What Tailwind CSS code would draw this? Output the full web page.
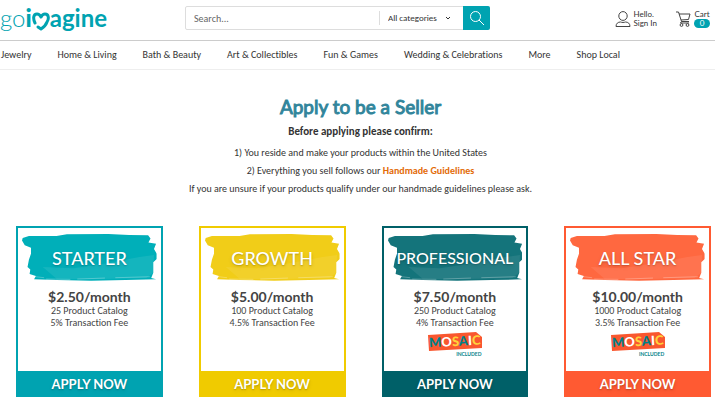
<!DOCTYPE html>
<html lang="en">
<head>
  <meta charset="UTF-8" />
  <meta name="viewport" content="width=device-width, initial-scale=1" />
  <title>Apply to be a Seller - goimagine</title>
  <script src="https://cdn.jsdelivr.net/npm/@tailwindcss/browser@4"></script>
</head>
<body class="bg-white font-['Carlito','Lato',sans-serif] text-[10px] text-[#333] overflow-x-hidden [font-variant-ligatures:none]">

  <!-- Header -->
  <header class="grid grid-cols-[185px_1fr_225px] h-[41px] border-b border-[#ccc]">
    <a href="#" aria-label="goimagine" class="flex items-baseline pt-0.5 font-['Lato',sans-serif] text-2xl leading-8 text-[#00a3b1]">
      <span class="font-light">go</span><span class="font-black">i</span>
      <svg class="w-[18px] h-[20px] self-start mt-2.5" viewBox="0 0 18 20" fill="none" stroke="currentColor" stroke-width="3" stroke-linecap="round" stroke-linejoin="round">
        <path d="M3 11C1 7 1 2 5 2c2 0 3 1 4 3 1-2 2-3 4-3 4 0 4 5 2 8-1 3-3 5-6 7L6 15" />
      </svg>
      <span class="font-bold">agine</span>
    </a>

    <form class="flex h-6 mt-1.5 border border-[#ddd] rounded-xs">
      <input type="text" aria-label="Search" placeholder="Search..." class="flex-1 min-w-0 pl-2 outline-none placeholder:text-[#666]" />
      <div class="relative flex items-center my-1 border-l border-[#ddd]">
        <select aria-label="Category" class="appearance-none w-[83px] pl-2 text-[9px] outline-none">
          <option>All categories</option>
        </select>
        <svg class="absolute right-3 w-1.5 h-1.5 pointer-events-none" viewBox="0 0 6 6" fill="none" stroke="#333"><path d="M1 2l2 2 2-2" /></svg>
      </div>
      <button type="submit" aria-label="Search" class="flex items-center justify-center w-[27px] -my-px -mr-px bg-[#00a3b1] rounded-r-xs">
        <svg class="w-4 h-4" viewBox="0 0 16 16" fill="none" stroke="white"><circle cx="6.5" cy="6.5" r="5" /><path d="M10 10l5 5" /></svg>
      </button>
    </form>

    <div class="flex justify-end gap-[19px] pt-2.5 pr-[5px] font-['Lato',sans-serif] text-[8px] leading-[9px]">
      <a href="#" class="flex gap-0.5">
        <svg class="w-4 h-4 mt-px" viewBox="0 0 16 16" fill="none" stroke="#444"><ellipse cx="8" cy="5" rx="4.2" ry="4.400" /><path d="M1 15.500c0-3 2-4.500 4.500-4.500 1.500.6 3.500.6 5 0C13 11 15 12.500 15 15.500z" /></svg>
        <span>Hello.<br />Sign In</span>
      </a>
      <a href="#" class="flex gap-[3px]">
        <svg class="w-[15px] h-4 mt-px" viewBox="0 0 15 16" fill="none" stroke="#444"><path d="M0 1h2.500l3 9.500H13M3 3h11l-1.500 5.500-7.500.5M5.500 10.500L4.500 12H13" /><circle cx="5.500" cy="14" r="1.400" /><circle cx="11.500" cy="14" r="1.400" /></svg>
        <span class="flex flex-col items-center">Cart<span class="w-4 rounded-full bg-[#00a3b1] text-center text-white">0</span></span>
      </a>
    </div>
  </header>

  <!-- Categories -->
  <nav class="border-b border-[#eee]">
    <ul class="flex gap-[26px] pl-px h-7 pb-0.5 items-center whitespace-nowrap">
      <li><a href="#">Jewelry</a></li>
      <li><a href="#">Home &amp; Living</a></li>
      <li><a href="#">Bath &amp; Beauty</a></li>
      <li><a href="#">Art &amp; Collectibles</a></li>
      <li><a href="#">Fun &amp; Games</a></li>
      <li><a href="#">Wedding &amp; Celebrations</a></li>
      <li><a href="#">More</a></li>
      <li><a href="#">Shop Local</a></li>
    </ul>
  </nav>

  <main>
    <section class="pt-6 pl-1.5 text-center">
      <h1 class="font-['Lato',sans-serif] text-[19px] leading-[26px] font-normal text-[#31859b] [-webkit-text-stroke:1px]">Apply to be a Seller</h1>
      <h2 class="my-1 text-[11px] leading-4 font-bold">Before applying please confirm:</h2>
      <p class="leading-[18px]">1) You reside and make your products within the United States</p>
      <p class="leading-[18px]">2) Everything you sell follows our <a href="#" class="font-bold text-[#e36c09]">Handmade Guidelines</a></p>
      <p class="leading-[18px]">If you are unsure if your products qualify under our handmade guidelines please ask.</p>
    </section>

    <!-- shared brush stroke and Mosaic tag -->
    <svg class="hidden">
      <symbol id="brush" viewBox="0 0 390 146" preserveAspectRatio="none">
        <path d="M2 12L20 6l80 0 30-5 120-1 60 3 55 1 7 10-6 12 22 4-6 16 8 14v16l-10 10v32l-6 16 14 4-88 2-100 2-100-2-65-2 5-10-18-6 2-14-8-8 4-22 6-18V42L8 34 0 20z" />
        <path d="M60 100l90 4 90-14 100-20 42-6-2 54-20 16-160 4-100-2z" fill="#fff" opacity=".08" />
        <path d="M24 128l40 5M70 137l70 1M160 137l80-3M270 133l100-3" stroke="#fff" stroke-width="2" opacity=".4" />
      </symbol>
      <symbol id="tag" viewBox="0 0 54 19">
        <path d="M0 3L48 0l6 5v11L1 19z" fill="#f9572f" />
      </symbol>
    </svg>

    <section class="grid grid-cols-4 gap-9 mt-7 pl-4 pr-1 text-center font-['Lato',sans-serif] text-[#444]">
      <article class="flex flex-col h-[171px] border-2 border-[#00a3b1]">
        <div class="relative mx-1 mt-1.5 h-12 flex items-center justify-center text-[#00afb9]">
          <svg class="absolute inset-0 w-full h-full" fill="currentColor"><use href="#brush" /></svg>
          <h3 class="relative text-lg font-medium text-white text-shadow-md">STARTER</h3>
        </div>
        <p class="mt-[7px] text-sm leading-4 font-bold">$2.50/month</p>
        <p class="font-['Carlito','Lato',sans-serif] leading-3">25 Product Catalog<br />5% Transaction Fee</p>
        <button class="mt-auto h-6 pt-1 bg-[#00a3b1] text-[13px] font-bold text-white text-shadow-md">APPLY NOW</button>
      </article>

      <article class="flex flex-col h-[171px] border-2 border-[#f0cb00]">
        <div class="relative mx-1 mt-1.5 h-12 flex items-center justify-center text-[#f1cd18]">
          <svg class="absolute inset-0 w-full h-full" fill="currentColor"><use href="#brush" /></svg>
          <h3 class="relative text-lg font-medium text-white text-shadow-md">GROWTH</h3>
        </div>
        <p class="mt-[7px] text-sm leading-4 font-bold">$5.00/month</p>
        <p class="font-['Carlito','Lato',sans-serif] leading-3">100 Product Catalog<br />4.5% Transaction Fee</p>
        <button class="mt-auto h-6 pt-1 bg-[#f0cb00] text-[13px] font-bold text-white text-shadow-md">APPLY NOW</button>
      </article>

      <article class="flex flex-col h-[171px] border-2 border-[#006068]">
        <div class="relative mx-1 mt-1.5 h-12 flex items-center justify-center text-[#14747b]">
          <svg class="absolute inset-0 w-full h-full" fill="currentColor"><use href="#brush" /></svg>
          <h3 class="relative text-base font-medium text-white text-shadow-md">PROFESSIONAL</h3>
        </div>
        <p class="mt-[7px] text-sm leading-4 font-bold">$7.50/month</p>
        <p class="font-['Carlito','Lato',sans-serif] leading-3">250 Product Catalog<br />4% Transaction Fee</p>
        <div class="relative self-center mt-[3px] w-[54px] h-[19px] flex items-center justify-center">
          <svg class="absolute inset-0 w-full h-full"><use href="#tag" /></svg>
          <span class="relative -rotate-3 text-[13px] font-black text-white"><span class="text-[#007f89]">M</span>O<span class="text-[#ffd23a]">S</span><span class="text-[#007f89]">A</span>I<span class="text-[#ffd23a]">C</span></span>
        </div>
        <p class="pl-7 text-[5px] leading-[6px] font-bold text-[#007f89]">INCLUDED</p>
        <button class="mt-auto h-6 pt-1 bg-[#006068] text-[13px] font-bold text-white text-shadow-md">APPLY NOW</button>
      </article>

      <article class="flex flex-col h-[171px] border-2 border-[#ff5a32]">
        <div class="relative mx-1 mt-1.5 h-12 flex items-center justify-center text-[#ff6840]">
          <svg class="absolute inset-0 w-full h-full" fill="currentColor"><use href="#brush" /></svg>
          <h3 class="relative text-lg font-medium text-white text-shadow-md">ALL STAR</h3>
        </div>
        <p class="mt-[7px] text-sm leading-4 font-bold">$10.00/month</p>
        <p class="font-['Carlito','Lato',sans-serif] leading-3">1000 Product Catalog<br />3.5% Transaction Fee</p>
        <div class="relative self-center mt-[3px] w-[54px] h-[19px] flex items-center justify-center">
          <svg class="absolute inset-0 w-full h-full"><use href="#tag" /></svg>
          <span class="relative -rotate-3 text-[13px] font-black text-white"><span class="text-[#007f89]">M</span>O<span class="text-[#ffd23a]">S</span><span class="text-[#007f89]">A</span>I<span class="text-[#ffd23a]">C</span></span>
        </div>
        <p class="pl-7 text-[5px] leading-[6px] font-bold text-[#007f89]">INCLUDED</p>
        <button class="mt-auto h-6 pt-1 bg-[#ff5a32] text-[13px] font-bold text-white text-shadow-md">APPLY NOW</button>
      </article>
    </section>
  </main>
</body>
</html>
